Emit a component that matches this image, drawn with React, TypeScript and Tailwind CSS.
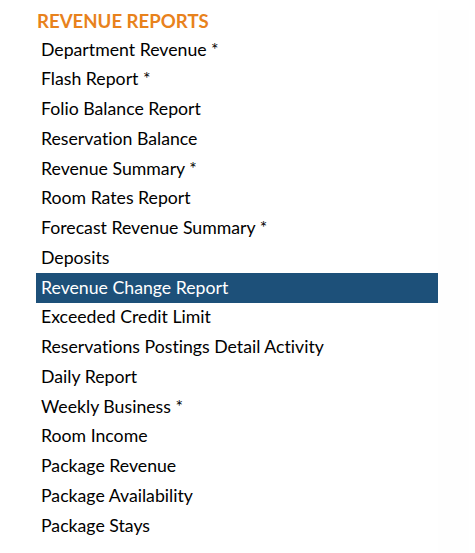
const items = [
  "Department Revenue *",
  "Flash Report *",
  "Folio Balance Report",
  "Reservation Balance",
  "Revenue Summary *",
  "Room Rates Report",
  "Forecast Revenue Summary *",
  "Deposits",
  "Revenue Change Report",
  "Exceeded Credit Limit",
  "Reservations Postings Detail Activity",
  "Daily Report",
  "Weekly Business *",
  "Room Income",
  "Package Revenue",
  "Package Availability",
  "Package Stays",
]

export default function App() {
  const active = "Revenue Change Report"

  return (
    <div className="h-[553px] w-[475px] bg-white font-['Lato',sans-serif] [font-variant-ligatures:none] flex">
      <div className="w-[438px] pl-[36px] pt-[10px]">
        <h2 className="pl-[1px] text-[18.6px] font-bold leading-[22px] text-[#e8821c] mb-[3px]">
          REVENUE REPORTS
        </h2>
        <ul>
          {items.map((item) => (
            <li
              key={item}
              className={
                item === active
                  ? "h-[29.75px] flex items-center pl-[5px] text-[17.7px] text-white bg-[#1d5079]"
                  : "h-[29.75px] flex items-center pl-[5px] text-[17.7px] text-black"
              }
            >
              {item}
            </li>
          ))}
        </ul>
      </div>
      <div className="mt-[10px] w-[31px] bg-[#fefefe]" />
    </div>
  )
}
